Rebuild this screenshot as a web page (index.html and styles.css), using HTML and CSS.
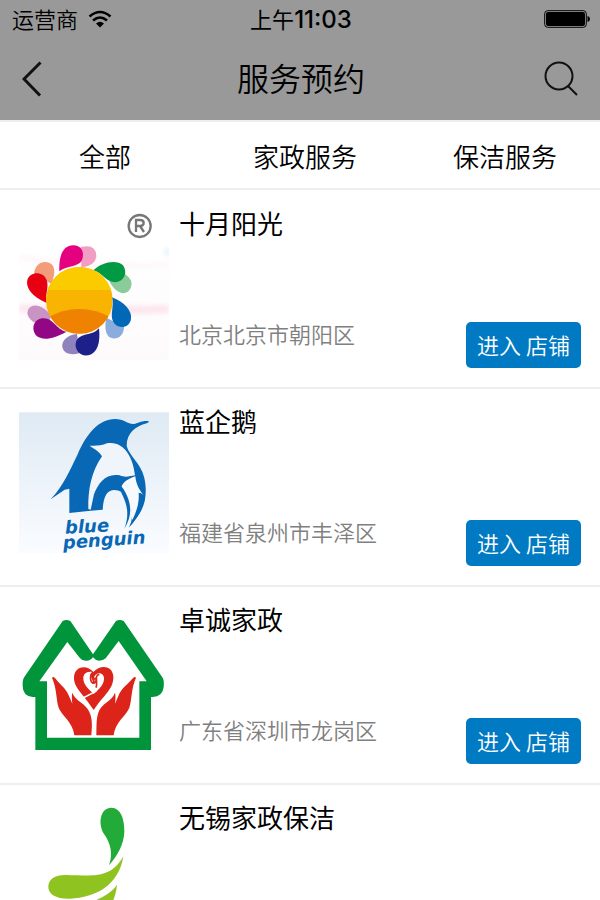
FILE: index.html
```html
<!DOCTYPE html>
<html lang="zh-CN">
    <head>
        <meta charset="utf-8">
        <meta name="viewport" content="width=device-width, initial-scale=1">

        <title>服务预约</title>
        <link rel="stylesheet" href="styles.css">
    </head>
    <body>
        <header class="topbar">
            <div class="status">
                <div class="carrier">
                    <span>运营商</span>
                    <svg class="wifi" viewBox="0 0 24 18" aria-hidden="true">
                        <path d="M1.5 6.5Q12 -2.5 22.5 6.5M5 10.5Q12 4.5 19 10.5" fill="none" stroke="#000" stroke-width="2.6"/>
                        <path d="M8 13.5Q12 10 16 13.5L12 17.5Z"/>
                    </svg>
                </div>
                <span class="time">上午<b>11:03</b></span>
                <svg class="battery" viewBox="0 0 46 18" aria-hidden="true">
                    <rect x=".7" y=".7" width="41.6" height="16.6" rx="3" fill="none" stroke="#000" stroke-width="1"/>
                    <rect x="2" y="2" width="39" height="14" rx="2"/>
                    <path d="M43.5 6Q46 6.500 46 9T43.500 12Z"/>
                </svg>
            </div>
            <div class="titlebar">
                <button type="button" class="icon-button" aria-label="返回">
                    <svg class="back" viewBox="0 0 20 36"><path d="M18.500 1.500L2 18L18 34.500"/></svg>
                </button>
                <h1>服务预约</h1>
                <button type="button" class="icon-button" aria-label="搜索">
                    <svg class="search" viewBox="0 0 36 36"><circle cx="15" cy="15" r="13.500"/><path d="M24 25L33 34"/></svg>
                </button>
            </div>
        </header>

        <nav class="tabs">
            <a href="#all">全部</a>
            <a href="#housekeeping">家政服务</a>
            <a href="#cleaning">保洁服务</a>
        </nav>

        <main class="shops">
            <article class="shop">
                <svg class="logo" viewBox="27 15 450 450" aria-hidden="true">
                    <defs>
                        <linearGradient id="haze" x1="0" y1="0" x2="0" y2="1">
                            <stop offset="0" stop-color="#fff"/>
                            <stop offset="1" stop-color="#fdfafc"/>
                        </linearGradient>
                        <filter id="soft"><feGaussianBlur stdDeviation="6"/></filter>
                        <clipPath id="sun"><circle cx="208" cy="286" r="100"/></clipPath>
                    </defs>
                    <rect x="27" y="125" width="450" height="340" fill="url(#haze)"/>
                    <g filter="url(#soft)">
                        <path d="M27 310Q250 320 477 312" fill="none" stroke="#fde6ee" stroke-width="24"/>
                        <path d="M27 157Q250 190 477 180" fill="none" stroke="#fef6f9" stroke-width="14"/>
                        <circle cx="474" cy="140" r="12" fill="#e6f5fd"/>
                    </g>
                    <g fill="none" stroke="#777">
                        <circle cx="389" cy="63" r="33" stroke-width="7"/>
                        <path d="M378 81V45H390Q401 45 401 54T390 63H378M390 63L402 81" stroke-width="7"/>
                    </g>
                    <path d="M212 126Q259 115 259 154Q256 182 214 187Z" fill="#f19ec2"/>
                    <path d="M345 207Q372 225 362 249C349 276 317 267 298 229Z" fill="#8bca99"/>
                    <path d="M289 338Q281 377 295 394C311 408 342 399 342 365Z" fill="#8aaddd"/>
                    <path d="M201 387C166 390 148 416 161 436Q174 454 210 444Z" fill="#9082bd"/>
                    <path d="M71 352Q45 333 55 313C70 289 106 307 124 333L115 355Z" fill="#c993c3"/>
                    <path d="M72 209C73 177 99 164 119 174Q144 186 124 236Z" fill="#f39c79"/>
                    <path d="M148 199C146 154 158 121 190 121C216 121 224 144 216 165C205 188 172 180 148 199Z" fill="#e4007f"/>
                    <path d="M250 196C277 170 320 163 339 181C354 202 343 229 317 232C289 233 279 205 250 196Z" fill="#009944"/>
                    <path d="M306 277C343 291 367 318 363 341C360 366 332 374 315 358C295 337 314 309 306 277Z" fill="#0068b7"/>
                    <path d="M267 370C272 413 262 446 235 451C208 455 190 430 199 408C212 382 247 394 267 370Z" fill="#1d2088"/>
                    <path d="M169 380C127 404 96 408 77 390C62 369 73 343 96 340C130 336 137 373 169 380Z" fill="#920783"/>
                    <path d="M110 294C68 277 46 248 52 226C58 203 90 198 105 216C122 239 104 265 110 294Z" fill="#e60012"/>
                    <g clip-path="url(#sun)">
                        <rect x="108" y="186" width="200" height="200" fill="#f8b400"/>
                        <rect x="108" y="186" width="200" height="69" fill="#fbcb00"/>
                        <path d="M108 340Q208 284 308 340V390H108Z" fill="#ef8200"/>
                    </g>
                </svg>
                <div class="info">
                    <h2>十月阳光</h2>
                    <div class="foot">
                        <p>北京北京市朝阳区</p>
                        <button type="button" class="enter">进入 店铺</button>
                    </div>
                </div>
            </article>

            <article class="shop">
                <svg class="logo" viewBox="27 24 450 450" aria-hidden="true">
                    <defs>
                        <linearGradient id="sky" x1="0" y1="0" x2="0" y2="1">
                            <stop offset="0" stop-color="#dfeaf4"/>
                            <stop offset="1" stop-color="#fafcff"/>
                        </linearGradient>
                    </defs>
                    <rect x="27" y="37" width="450" height="422" fill="url(#sky)"/>
                    <path fill="#0868b5" d="M122 298C162 255 179 211 202 165C230 99 268 57 315 57C342 57 354 73 371 72C386 70 393 61 415 63Q419 66 410 70C377 79 350 98 350 138C358 168 391 189 402 230C412 269 407 306 394 331C383 353 367 369 360 379C370 348 368 322 355 301C342 278 329 270 313 270C292 271 281 286 278 329L242 332L178 339V266L164 269Z"/>
                    <path fill="#f0f5fb" d="M239 137C254 138 273 138 291 130C340 121 369 170 375 226C360 228 347 234 329 226C290 218 265 247 252 283L242 329L235 327C234 270 243 217 276 169C268 154 256 149 239 137Z"/>
                    <path fill="#f6f9fd" d="M335 259C342 243 358 235 376 229C378 255 391 274 401 286L390 279C389 307 381 344 366 361C366 318 355 299 342 281Z"/>
                    <path fill="#0868b5" d="M386 278Q402 282 405 293C397 332 373 367 356 383C373 348 389 320 386 278Z"/>
                    <path fill="#0868b5" d="M337 262C362 300 372 340 343 386C360 340 350 310 334 278Z"/>
                    <g class="logo-text" fill="#0868b5">
                        <text x="166" y="401" transform="rotate(-3 166 401)">blue</text>
                        <text x="160" y="447" transform="rotate(-4 160 447)">penguin</text>
                    </g>
                </svg>
                <div class="info">
                    <h2>蓝企鹅</h2>
                    <div class="foot">
                        <p>福建省泉州市丰泽区</p>
                        <button type="button" class="enter">进入 店铺</button>
                    </div>
                </div>
            </article>

            <article class="shop">
                <svg class="logo" viewBox="27 3 450 450" aria-hidden="true">
                    <path fill="#00943b" fill-rule="evenodd" d="M158 48Q169 42 181 48L249 148L318 48Q329 42 341 48L457 217Q463 224 461 246Q458 275 428 276H423V435H76V276H68Q38 273 38 243Q37 224 43 216ZM172 111L88 229H111V398H388V229H410L326 108L287 160Q280 167 267 167Q256 166 249 157Q241 168 227 167Q216 167 209 158Z"/>
                    <path fill="#dc241b" d="M126 218Q130 213 137 221C151 240 168 249 177 273L187 296Q184 274 187 263C196 289 229 295 239 323C248 343 246 368 244 391H193C190 353 154 330 146 308C138 283 141 252 126 218Z"/>
                    <path fill="#dc241b" d="M378 218Q374 213 367 221C351 240 334 249 325 273L315 296Q318 274 315 263C306 289 273 295 265 323C258 343 260 368 259 391H311C314 353 350 330 358 308C366 283 363 252 378 218Z"/>
                    <path fill="#dc241b" d="M250 201C231 178 194 183 192 216C191 249 218 264 251 315C283 267 312 252 310 212C305 179 269 179 250 201Z"/>
                    <path fill="#fff" d="M247 201C229 198 219 207 220 223C222 240 234 252 251 267C267 253 281 240 282 223C284 204 263 198 254 213C251 219 252 224 249 230L243 216C240 213 238 208 247 201Z"/>
                    <path fill="none" stroke="#dc241b" stroke-width="5" d="M249 201C232 224 249 243 256 231C264 217 249 216 251 232M268 208C251 211 265 233 258 248"/>
                    <path fill="none" stroke="#fff" stroke-width="5" d="M214 281Q244 267 260 256"/>
                </svg>
                <div class="info">
                    <h2>卓诚家政</h2>
                    <div class="foot">
                        <p>广东省深圳市龙岗区</p>
                        <button type="button" class="enter">进入 店铺</button>
                    </div>
                </div>
            </article>

            <article class="shop">
                <svg class="logo" viewBox="27 72 450 450" aria-hidden="true">
                    <path fill="#22ab38" d="M297 256C310 221 301 188 282 162C262 128 272 83 304 83C333 84 344 118 343 156C341 195 323 226 297 256Z"/>
                    <path fill="#8fc31f" d="M340 229C328 313 258 354 180 356C138 357 114 342 115 320C115 297 136 284 170 285C242 286 301 300 340 229Z"/>
                    <path fill="#8fc31f" d="M321 314C314 389 263 438 190 447C165 449 152 437 155 421C165 379 283 372 321 314Z"/>
                </svg>
                <div class="info">
                    <h2>无锡家政保洁</h2>
                </div>
            </article>
        </main>
    </body>
</html>
```
FILE: styles.css
```css
* { box-sizing: border-box; }

body {
    margin: 0;
    height: 100vh;
    display: flex;
    flex-direction: column;
    background-color: #fff;
    color: #000;
    font-family: "Noto Sans CJK SC", sans-serif;
    font-weight: 350;
}

h1, h2, p {
    margin: 0;
    font-weight: inherit;
}

button {
    border: 0;
    padding: 0;
    font: inherit;
    cursor: pointer;
}

/* Status bar and title */
.topbar {
    flex: none;
    background-color: #999;
}

.status {
    display: grid;
    grid-template-columns: 1fr auto 1fr;
    align-items: center;
    height: 38px;
    padding: 0 10px 0 12px;
    font-size: 22px;
    line-height: 36px;
}

.carrier {
    display: flex;
    align-items: center;
    gap: 10px;
}

.carrier span {
    padding-bottom: 2px;
}

.wifi {
    width: 24px;
    height: 18px;
}

.time {
    font-weight: 400;
}

.time b {
    font-family: Inter, sans-serif;
    font-size: 24px;
    font-weight: 500;
}

.battery {
    justify-self: end;
    width: 46px;
    height: 18px;
}

.titlebar {
    display: flex;
    align-items: center;
    justify-content: space-between;
    height: 82px;
    padding: 0 20px 0 22px;
}

.titlebar h1 {
    padding-bottom: 4px;
    font-size: 32px;
    line-height: 78px;
}

.icon-button {
    display: flex;
    width: 36px;
    background: none;
}

.icon-button svg {
    height: 36px;
    fill: none;
    stroke: #111;
}

.back {
    width: 20px;
    stroke-width: 3;
}

.search {
    width: 36px;
    stroke-width: 2;
}

/* Categories */
.tabs {
    flex: none;
    display: grid;
    grid-template-columns: repeat(3, 1fr);
    border-top: 2px solid #eee;
    border-bottom: 2px solid #eee;
}

.tabs a {
    padding: 2px 0 0 10px;
    color: inherit;
    font-size: 26px;
    line-height: 64px;
    text-align: center;
    text-decoration: none;
}

/* Shop list */
.shops {
    flex: 1;
    min-height: 0;
    padding-top: 1px;
    overflow-y: auto;
    scrollbar-width: none;
}

.shop {
    display: flex;
    gap: 10px;
    min-height: 198px;
    padding: 19px;
    border-bottom: 2px solid #eee;
}

.logo {
    flex: none;
    width: 150px;
    height: 150px;
}

.logo-text {
    font-family: "DejaVu Sans", sans-serif;
    font-size: 54px;
    font-style: italic;
    font-weight: 700;
}

.info {
    flex: 1;
    display: flex;
    flex-direction: column;
    justify-content: space-between;
}

.info h2 {
    font-size: 26px;
    font-weight: 400;
    line-height: 26px;
}

.foot {
    display: flex;
    justify-content: space-between;
}

.foot p {
    color: #808080;
    font-size: 22px;
    line-height: 22px;
}

.enter {
    height: 46px;
    padding: 0 11px 2px;
    border-radius: 5px;
    background-color: #007ac3;
    color: #fff;
    font-size: 22px;
}
```
